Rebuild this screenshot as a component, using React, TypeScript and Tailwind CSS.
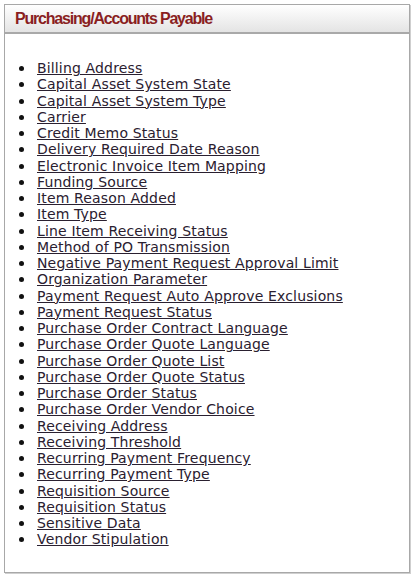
import React from "react";

const items = [
  "Billing Address",
  "Capital Asset System State",
  "Capital Asset System Type",
  "Carrier",
  "Credit Memo Status",
  "Delivery Required Date Reason",
  "Electronic Invoice Item Mapping",
  "Funding Source",
  "Item Reason Added",
  "Item Type",
  "Line Item Receiving Status",
  "Method of PO Transmission",
  "Negative Payment Request Approval Limit",
  "Organization Parameter",
  "Payment Request Auto Approve Exclusions",
  "Payment Request Status",
  "Purchase Order Contract Language",
  "Purchase Order Quote Language",
  "Purchase Order Quote List",
  "Purchase Order Quote Status",
  "Purchase Order Status",
  "Purchase Order Vendor Choice",
  "Receiving Address",
  "Receiving Threshold",
  "Recurring Payment Frequency",
  "Recurring Payment Type",
  "Requisition Source",
  "Requisition Status",
  "Sensitive Data",
  "Vendor Stipulation",
];

export default function App() {
  return (
    <div className="w-[412px] h-[576px] bg-white pt-[4px] pl-[4px]">
      <div className="w-[406px] h-[569px] border border-[#a8a8a8] shadow-[1px_1px_0_#cfcfcf] flex flex-col">
        <div className="h-[29px] border-b-2 border-[#a9a9a9] bg-gradient-to-b from-white to-[#e4e4e4] flex items-center pl-[10px]">
          <span className="font-['Liberation_Sans',Arial,sans-serif] font-bold text-[16px] text-[#8a1f1f] tracking-[-1.2px]">
            Purchasing/Accounts Payable
          </span>
        </div>
        <ul className="pt-[26px] pl-[14px] font-['DejaVu_Sans',Verdana,sans-serif] text-[14px] leading-[16.25px] tracking-[0.15px] text-[#222]">
          {items.map((t) => (
            <li key={t} className="flex items-center">
              <span className="w-[5px] h-[5px] rounded-full bg-[#111] mr-[13px] mt-[1px]" />
              <a href="#" className="underline text-[#2a2030] whitespace-nowrap">{t}</a>
            </li>
          ))}
        </ul>
      </div>
    </div>
  );
}
